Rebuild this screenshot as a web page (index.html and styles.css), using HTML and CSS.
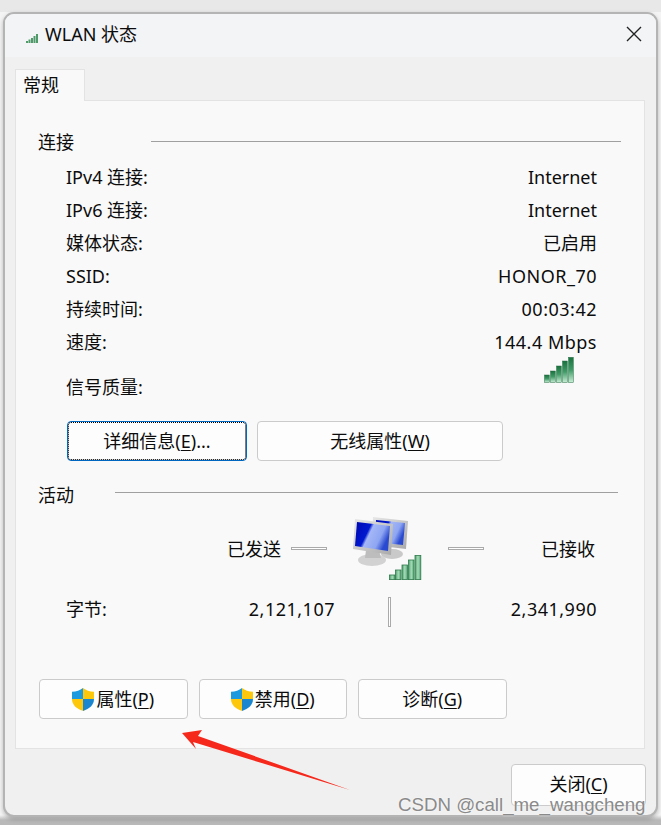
FILE: index.html
```html
<!DOCTYPE html>
<html lang="zh-CN">
<head>
  <meta charset="UTF-8">
  <meta name="viewport" content="width=device-width, initial-scale=1.0">
  <title>WLAN 状态</title>
  <link rel="stylesheet" href="styles.css">
</head>
<body>
  <svg class="defs" width="0" height="0" aria-hidden="true">
    <defs>
      <linearGradient id="bar" x1="0" y1="0" x2="0" y2="1">
        <stop offset="0" stop-color="#17713d"/>
        <stop offset="0.5" stop-color="#3f9c66"/>
        <stop offset="1" stop-color="#c9f0d6"/>
      </linearGradient>
      <linearGradient id="bar-big" x1="0" y1="0" x2="1" y2="0">
        <stop offset="0" stop-color="#4c9d6b"/>
        <stop offset="0.5" stop-color="#a6dcb9"/>
        <stop offset="1" stop-color="#55a574"/>
      </linearGradient>
      <linearGradient id="screen" x1="0" y1="0" x2="1" y2="0.4">
        <stop offset="0" stop-color="#0008b0"/>
        <stop offset="0.42" stop-color="#0018d0"/>
        <stop offset="0.5" stop-color="#a4b6f6"/>
        <stop offset="0.8" stop-color="#8ea6f2"/>
        <stop offset="1" stop-color="#2a4ad0"/>
      </linearGradient>
      <linearGradient id="frame" x1="0" y1="0" x2="1" y2="1">
        <stop offset="0" stop-color="#e8e8e8"/>
        <stop offset="1" stop-color="#a9a9a9"/>
      </linearGradient>
      <symbol id="shield" viewBox="0 0 22 23">
        <path d="M11 0C8 2.400 4.500 3.500 0 3.800V11H11Z" fill="#1b9ae0"/>
        <path d="M11 0C14 2.400 17.500 3.500 22 3.800V11H11Z" fill="#fdc70c"/>
        <path d="M0 11C0 17 4.500 20.800 11 23V11Z" fill="#fdc70c"/>
        <path d="M22 11C22 17 17.500 20.800 11 23V11Z" fill="#1b86d0"/>
      </symbol>
    </defs>
  </svg>

  <div class="window">
    <header class="titlebar">
      <svg class="title-icon" viewBox="0 0 12 9" width="12" height="9" aria-hidden="true">
        <rect x="0" y="7" width="2" height="2" fill="#4f9a68"/>
        <rect x="2.500" y="5.500" width="2" height="3.500" fill="#4f9a68"/>
        <rect x="5" y="4" width="2" height="5" fill="#4f9a68"/>
        <rect x="7.500" y="2" width="2" height="7" fill="#4f9a68"/>
        <rect x="10" y="0" width="2" height="9" fill="#4f9a68"/>
      </svg>
      <span class="title-text">WLAN 状态</span>
      <svg class="close-icon" viewBox="0 0 16 16" width="16" height="16" aria-hidden="true">
        <path d="M1 1L15 15M15 1L1 15" stroke="#222" stroke-width="1.400" fill="none"/>
      </svg>
    </header>

    <div class="content">
      <div class="tabs"><div class="tab">常规</div></div>

      <main class="panel">
        <div class="group-head">
          <span>连接</span>
          <i class="rule rule-connect"></i>
        </div>
        <div class="row"><span>IPv4 连接:</span><span>Internet</span></div>
        <div class="row"><span>IPv6 连接:</span><span>Internet</span></div>
        <div class="row"><span>媒体状态:</span><span>已启用</span></div>
        <div class="row"><span>SSID:</span><span class="wide">HONOR_70</span></div>
        <div class="row"><span>持续时间:</span><span class="wide">00:03:42</span></div>
        <div class="row"><span>速度:</span><span class="wide">144.4 Mbps</span></div>
        <div class="row row-signal">
          <span class="signal-label">信号质量:</span>
          <svg class="signal" viewBox="0 0 30 26" width="30" height="26" aria-hidden="true">
            <rect x="0.500" y="18" width="4.800" height="7.600" fill="url(#bar)" stroke="#2c6e48" stroke-width="0.500"/>
            <rect x="6.500" y="14" width="4.800" height="11.600" fill="url(#bar)" stroke="#2c6e48" stroke-width="0.500"/>
            <rect x="12.500" y="9" width="4.800" height="16.600" fill="url(#bar)" stroke="#2c6e48" stroke-width="0.500"/>
            <rect x="18.500" y="4" width="4.800" height="21.600" fill="url(#bar)" stroke="#2c6e48" stroke-width="0.500"/>
            <rect x="24.500" y="0.300" width="4.800" height="25.300" fill="url(#bar)" stroke="#2c6e48" stroke-width="0.500"/>
          </svg>
        </div>

        <div class="btn-row btn-row-info">
          <button class="btn btn-focus btn-details">详细信息(<u>E</u>)...</button>
          <button class="btn btn-wireless">无线属性(<u>W</u>)</button>
        </div>

        <div class="group-head group-head-activity">
          <span>活动</span>
          <i class="rule rule-activity"></i>
        </div>

        <div class="traffic">
          <span class="traffic-label">已发送</span>
          <i class="dash dash-left"></i>
          <svg class="net-icon" viewBox="0 0 70 64" width="70" height="64" aria-hidden="true">
            <ellipse cx="40" cy="38" rx="11" ry="5" fill="#c9c9c9"/>
            <path d="M21 1L56 5L54 33L20 29Z" fill="url(#frame)"/>
            <path d="M24 4L53 7L51 29L23 26Z" fill="url(#screen)"/>
            <ellipse cx="20" cy="44" rx="14" ry="6" fill="#d2d2d2"/>
            <path d="M14 34H27L29 42H13Z" fill="#bdbdbd"/>
            <path d="M3 3L41 8L39 39L1 33Z" fill="url(#frame)"/>
            <path d="M5 6L38 10L36 35L3 30Z" fill="url(#screen)"/>
            <g fill="url(#bar-big)" stroke="#2f7a4c" stroke-width="0.800">
              <rect x="37.500" y="59" width="5.500" height="4.600"/>
              <rect x="43.500" y="54" width="5.500" height="9.600"/>
              <rect x="50" y="49" width="5.500" height="14.600"/>
              <rect x="56.500" y="44" width="5.500" height="19.600"/>
              <rect x="63" y="39.500" width="5.800" height="24.100"/>
            </g>
          </svg>
          <i class="dash dash-right"></i>
          <span class="traffic-label">已接收</span>
        </div>

        <div class="bytes">
          <span>字节:</span>
          <span class="num wide">2,121,107</span>
          <i class="divider"></i>
          <span class="num wide">2,341,990</span>
        </div>

        <div class="btn-row btn-row-actions">
          <button class="btn btn-action"><svg class="shield" aria-hidden="true"><use href="#shield"/></svg>属性(<u>P</u>)</button>
          <button class="btn btn-action"><svg class="shield" aria-hidden="true"><use href="#shield"/></svg>禁用(<u>D</u>)</button>
          <button class="btn btn-action">诊断(<u>G</u>)</button>
        </div>
      </main>

      <footer class="footer">
        <button class="btn btn-close">关闭(<u>C</u>)</button>
      </footer>
    </div>
  </div>

  <!-- annotation and watermark sit on top of the dialog -->
  <svg class="arrow" viewBox="0 0 661 825" width="661" height="825" aria-hidden="true">
    <path d="M182 733L202 730L198 736L350 790L193 742L196 749Z" fill="#f6281c"/>
  </svg>
  <div class="watermark">CSDN @call_me_wangcheng</div>
</body>
</html>
```

FILE: styles.css
```css
:root {
  --text-color: #0c0c0c;
  --window-background: #f0f0f0;
  --panel-background: #f9f9f9;
  --button-border: #cbcbcb;
}

html, body {
  margin: 0;
  padding: 0;
  height: 825px;
  overflow: hidden;
}

body {
  position: relative;
  padding-top: 12px;
  box-sizing: border-box;
  background: linear-gradient(#e8e8e8 0, #e8e8e8 12px, #f4f4f4 12px, #f4f4f4 815px, #b9b9b9 820px);
  font-family: "Noto Sans", "Noto Sans CJK SC", sans-serif;
  font-size: 18px;
  color: var(--text-color);
}

.defs {
  position: absolute;
}

.wide {
  letter-spacing: 0.5px;
}

.window {
  width: 655px;
  margin-left: 3px;
  box-sizing: border-box;
  border: 2px solid #b4b4b4;
  border-radius: 11px;
  background: var(--window-background);
  box-shadow: 0 2px 4px rgba(0, 0, 0, 0.25);
  overflow: hidden;
}

.titlebar {
  display: flex;
  align-items: center;
  height: 43px;
  padding: 0 14px 0 21px;
  background: #f3f4f6;
}

.title-icon {
  margin: 5px 7px 0 0;
}

.title-text {
  flex: 1;
  margin-top: -5px;
}

.close-icon {
  margin-top: -3px;
}

.content {
  padding: 12px 11px 0 10px;
}

.tabs {
  display: flex;
  height: 32px;
}

.tab {
  width: 70px;
  box-sizing: border-box;
  border: 1px solid #e3e3e3;
  border-bottom: none;
  padding-left: 7px;
  line-height: 30px;
  background: var(--panel-background);
  position: relative;
  z-index: 1;
}

.panel {
  height: 649px;
  box-sizing: border-box;
  padding: 29px 23px 0 22px;
  background: var(--panel-background);
  border: 1px solid #e3e3e3;
  margin-top: -1px;
}

.group-head {
  display: flex;
  height: 24px;
  line-height: 24px;
}

.rule {
  flex: 1;
  height: 1px;
  background: #a0a0a0;
}

.rule-connect {
  margin: 11px 0 0 77px;
}

.rule-activity {
  margin: 9px 3px 0 41px;
}

.group-head-activity {
  margin-top: 22px;
}

.row {
  display: flex;
  justify-content: space-between;
  height: 33px;
  line-height: 33px;
  padding: 0 24px 0 28px;
}

.group-head + .row {
  margin-top: 7px;
}

.row-signal {
  height: 44px;
  margin-top: -2px;
}

.signal-label {
  padding-top: 14px;
}

.signal {
  margin-right: 23px;
}

.btn {
  height: 40px;
  box-sizing: border-box;
  padding: 0;
  border: 1px solid var(--button-border);
  border-radius: 4px;
  background: #fdfdfd;
  font: inherit;
  line-height: 20px;
  color: inherit;
}

.btn u {
  text-underline-offset: 2px;
}

.btn-row {
  display: flex;
}

.btn-row-info {
  gap: 10px;
  margin: 20px 0 0 29px;
}

.btn-details {
  width: 180px;
}

.btn-wireless {
  width: 246px;
}

.btn-focus {
  border-color: #0067c0;
  outline: 1px dotted #000;
  outline-offset: -2px;
}

.traffic {
  display: flex;
  align-items: center;
  height: 64px;
  margin-top: 9px;
  padding-left: 189px;
}

.traffic-label {
  width: 55px;
}

.dash {
  width: 36px;
  height: 3px;
  box-sizing: border-box;
  border: 1px solid #aaa;
  background: #fff;
}

.dash-left {
  margin: 0 25px 0 9px;
}

.dash-right {
  margin: 0 57px 0 26px;
}

.bytes {
  display: grid;
  grid-template-columns: 70px 199px 56px 1fr;
  align-items: start;
  height: 30px;
  line-height: 24px;
  margin-top: 17px;
  padding: 0 24px 0 28px;
}

.num {
  text-align: right;
}

.divider {
  width: 3px;
  height: 30px;
  margin-left: 53px;
  box-sizing: border-box;
  border: 1px solid #aaa;
  background: #fff;
}

.btn-row-actions {
  gap: 11px;
  margin: 52px 0 0 1px;
}

.btn-action {
  display: flex;
  align-items: center;
  justify-content: center;
  width: 148.5px;
}

.shield {
  width: 22px;
  height: 23px;
  margin-right: 2px;
}

.footer {
  display: flex;
  justify-content: flex-end;
  padding: 15px 0 9px;
}

.btn-close {
  width: 135px;
  height: 42px;
  padding-bottom: 2px;
  margin-right: -1px;
}

.arrow {
  position: absolute;
  left: 0;
  top: 0;
  pointer-events: none;
}

.watermark {
  position: absolute;
  left: 398px;
  top: 797px;
  font-family: "Liberation Sans", sans-serif;
  font-size: 18.7px;
  line-height: 16px;
  color: #8a8a8a;
  text-shadow: 0 0 2px #fff;
}
```
